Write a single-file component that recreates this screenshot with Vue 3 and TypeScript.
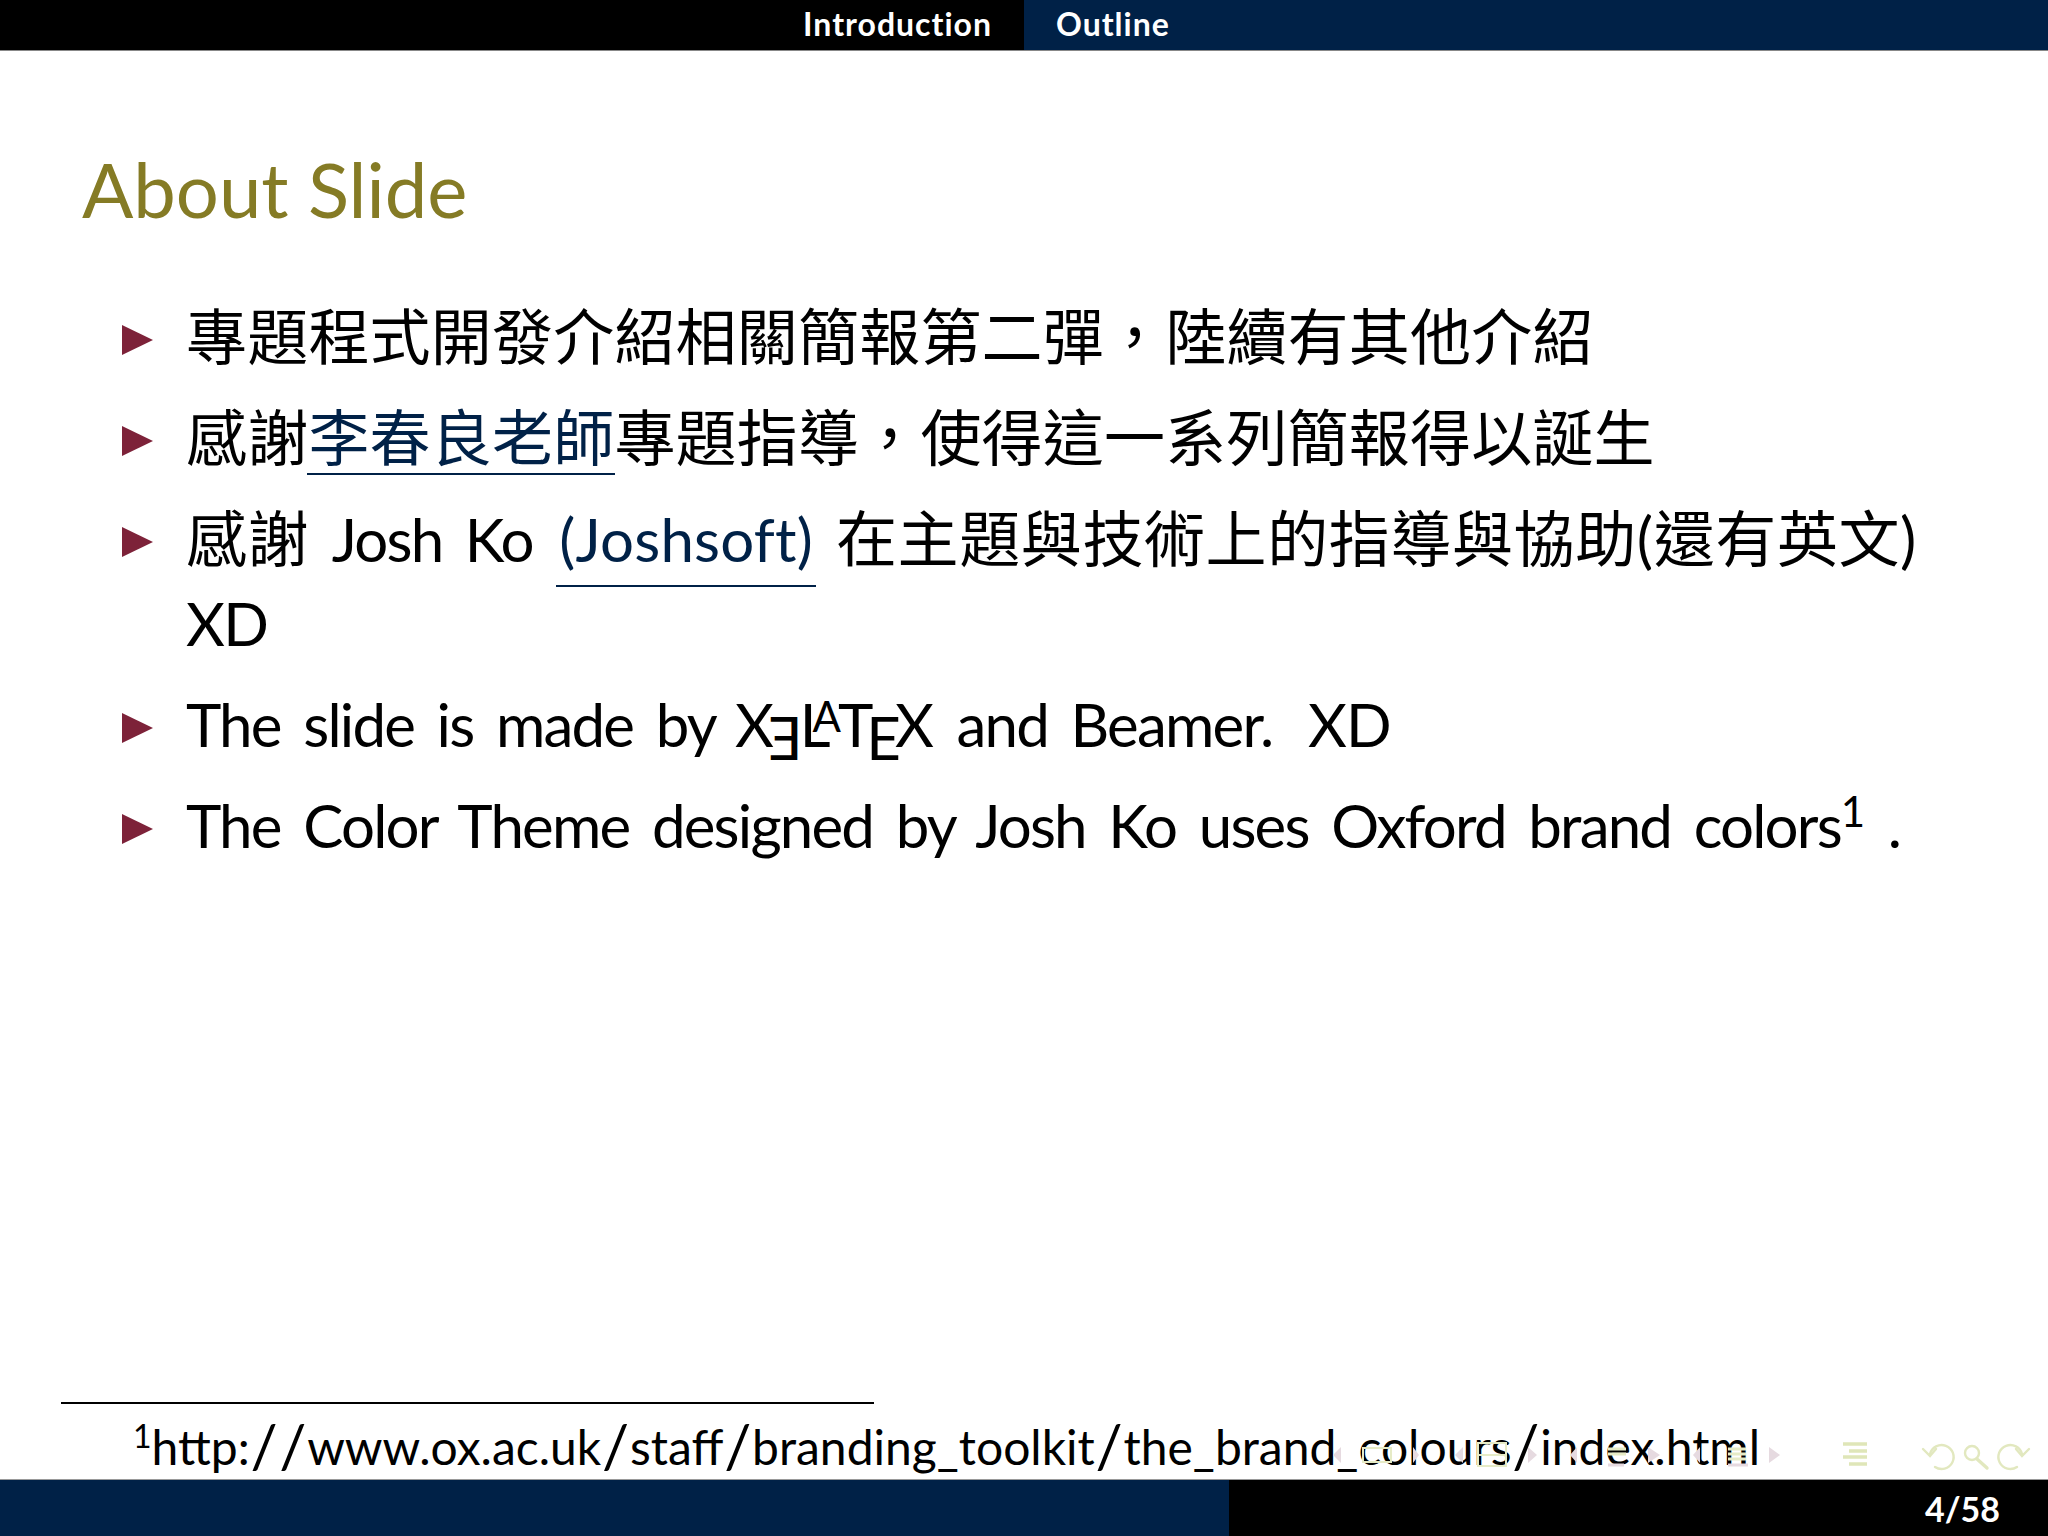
<script setup lang="ts">
interface Part { text: string; link?: boolean }
const rows: { id: number; parts: Part[] }[] = [
  { id: 1, parts: [{ text: '專題程式開發介紹相關簡報第二彈，陸續有其他介紹' }] },
  { id: 2, parts: [{ text: '感謝' }, { text: '李春良老師', link: true }, { text: '專題指導，使得這一系列簡報得以誕生' }] },
]
const url = 'http://www.ox.ac.uk/staff/branding_toolkit/the_brand_colours/index.html'
const urlParts: string[] = url.split(/(\/)/)
const pink = [
  { x: 53, dir: -1, w: 8 }, { x: 133, dir: 1, w: 6 }, { x: 175, dir: -1, w: 8 }, { x: 248, dir: 1, w: 9 },
  { x: 290, dir: -1, w: 7 }, { x: 368, dir: 1, w: 12 }, { x: 413, dir: -1, w: 7 }, { x: 489, dir: 1, w: 11 },
]
function tri(t: { x: number; dir: number; w: number }): string {
  return t.dir > 0 ? `M${t.x} 17L${t.x + t.w} 25L${t.x} 33Z` : `M${t.x + t.w} 17L${t.x} 25L${t.x + t.w} 33Z`
}
</script>

<template>
  <div class="page">
    <header class="top">
      <div class="top-left"><span class="nav">Introduction</span></div>
      <div class="top-right"><span class="nav">Outline</span></div>
    </header>
    <main class="slide">
      <h1 class="title">About Slide</h1>
      <ul class="list">
        <li v-for="r in rows" :key="r.id" class="item">
          <svg class="tri" viewBox="0 0 31 30"><path d="M0 0L31 15L0 30Z" /></svg>
          <div class="body">
            <template v-for="p in r.parts" :key="p.text">
              <a v-if="p.link" class="link link-cjk">{{ p.text }}</a>
              <span v-else>{{ p.text }}</span>
            </template>
          </div>
        </li>
        <li class="item">
          <svg class="tri" viewBox="0 0 31 30"><path d="M0 0L31 15L0 30Z" /></svg>
          <div class="body wrap">
            <div class="line">感謝<span class="lat"> Josh Ko </span><a class="link link-lat lat">(Joshsoft)</a>在主題與技術上的指導與協助(還有英文)</div>
            <div class="line2 lat">XD</div>
          </div>
        </li>
        <li class="item">
          <svg class="tri" viewBox="0 0 31 30"><path d="M0 0L31 15L0 30Z" /></svg>
          <div class="body lat">The slide is made by <span class="xe"><span>X</span><span class="rev">E</span><span class="l">L</span><span class="a">A</span><span class="t">T</span><span class="e">E</span><span class="x2">X</span></span> and Beamer. <span class="xd">XD</span></div>
        </li>
        <li class="item">
          <svg class="tri" viewBox="0 0 31 30"><path d="M0 0L31 15L0 30Z" /></svg>
          <div class="body lat">The Color Theme designed by Josh Ko uses Oxford brand colors<sup class="sup">1</sup> .</div>
        </li>
      </ul>
      <div class="spacer"></div>
      <footer class="notes">
        <div class="rule"></div>
        <p class="note"><sup class="nsup">1</sup><template v-for="(u, i) in urlParts" :key="i"><span v-if="u === '/'" class="slash">/</span><template v-else>{{ u }}</template></template></p>
      </footer>
      <svg class="navicons" width="768" height="49" viewBox="0 0 768 49" fill="none">
        <g fill="#e6dae0"><path v-for="(t, i) in pink" :key="i" :d="tri(t)" /></g>
        <g stroke="#e6ebc6" stroke-width="2">
          <rect x="83" y="18" width="28" height="14" />
          <rect x="198" y="13" width="28" height="12" />
          <rect x="198" y="25" width="28" height="11" />
        </g>
        <g stroke="#e6ebc6" stroke-width="3">
          <path d="M328 19h18M328 24h18" />
          <path d="M448 19h18M448 24h18M448 29h18" />
          <path d="M563 14h24M569 21h18M563 27h24M569 34h18" stroke-width="3.5" stroke="#dfe6b8"/>
        </g>
        <g stroke="#e6dae0" stroke-width="3"><path d="M328 35h16M448 35h20" /></g>
        <g stroke="#e2e8bf" stroke-width="2.4" stroke-linecap="round">
          <path d="M650 24a12 12 0 1 1 5 13" />
          <path d="M643 19l7 7 6-7" />
          <circle cx="692" cy="23" r="7" />
          <path d="M697 29l10 9" stroke-width="3.4" />
          <path d="M742 24a12 12 0 1 0 -5 13" />
          <path d="M749 19l-7 7 -6-7" />
        </g>
      </svg>
    </main>
    <div class="bottom">
      <div class="bottom-left"></div>
      <div class="bottom-right"><span class="page-no">4/58</span></div>
    </div>
  </div>
</template>

<style>
html, body { margin: 0; background: #fff; }
</style>

<style scoped>
.page { width: 2048px; height: 1536px; display: flex; flex-direction: column; background: #fff; font-family: Lato, "Noto Sans CJK TC", sans-serif; color: #000; overflow: hidden; }
.top { display: flex; height: 50px; flex: none; border-bottom: 1px solid #888; box-sizing: content-box; }
.top-left { width: 1024px; background: #000; display: flex; justify-content: flex-end; padding-right: 32px; box-sizing: border-box; align-items: center; }
.top-right { flex: 1; background: #002147; display: flex; padding-left: 32px; align-items: center; }
.nav { color: #fff; font-size: 32px; font-weight: 700; margin-top: -4px; letter-spacing: 1px; }
.slide { flex: 1; position: relative; display: flex; flex-direction: column; }
.title { margin: 93px 0 0 82px; font-size: 76px; font-weight: 400; color: #857b25; line-height: 90px; }
.list { list-style: none; margin: 66px 0 0 122px; padding: 0; display: flex; flex-direction: column; gap: 28px; }
.item { display: flex; align-items: flex-start; }
.tri { width: 31px; height: 30px; fill: #7d2239; flex: none; margin-top: 25px; margin-right: 33px; }
.body { font-size: 61px; line-height: 73px; white-space: nowrap; letter-spacing: 0.2px; }
.line { letter-spacing: 0.6px; }
.lat { font-size: 60px; letter-spacing: -1.8px; word-spacing: 9px; }
.link { color: #002147; position: relative; }
.link::after { content: ""; position: absolute; left: -1px; right: -1px; height: 2px; background: #002147; }
.link-cjk::after { bottom: -1px; }
.link-lat { letter-spacing: 0.2px; margin: 0 23px 0 4px; }
.link-lat::after { bottom: -12px; left: -3px; right: -3px; }
.wrap { display: flex; flex-direction: column; }
.line2 { margin-top: 11px; }
.xe { display: inline-flex; letter-spacing: 0; margin-left: -2px; }
.rev { display: inline-block; transform: scaleX(-1) translateY(13px); margin-left: -6px; }
.l { margin-left: -3px; }
.a { font-size: 42px; margin-left: -18px; margin-top: -2px; line-height: 60px; }
.t { margin-left: -3px; }
.e { transform: translateY(13px); margin-left: -7px; }
.x2 { margin-left: -6px; }
.xd { margin-left: 13px; letter-spacing: -1px; }
.sup { font-size: 42px; line-height: 0; letter-spacing: 0; }
.spacer { flex: 1; }
.notes { display: flex; flex-direction: column; }
.rule { width: 813px; height: 2px; background: #000; margin-left: 61px; margin-bottom: 7px; }
.note { margin: 0 0 -4px 133px; font-size: 48px; line-height: 72px; white-space: nowrap; }
.slash { font-size: 60px; line-height: 0; vertical-align: -3px; margin: 0 0.8px; }
.nsup { font-size: 32px; line-height: 0; }
.navicons { position: absolute; right: 0; bottom: 0; }
.bottom { display: flex; height: 57px; flex: none; border-top: 1px solid #999; box-sizing: border-box; }
.bottom-left { width: 1229px; background: #002147; }
.bottom-right { flex: 1; background: #000; display: flex; justify-content: flex-end; align-items: center; padding-right: 48px; }
.page-no { color: #fff; font-size: 34px; font-weight: 700; }
</style>
